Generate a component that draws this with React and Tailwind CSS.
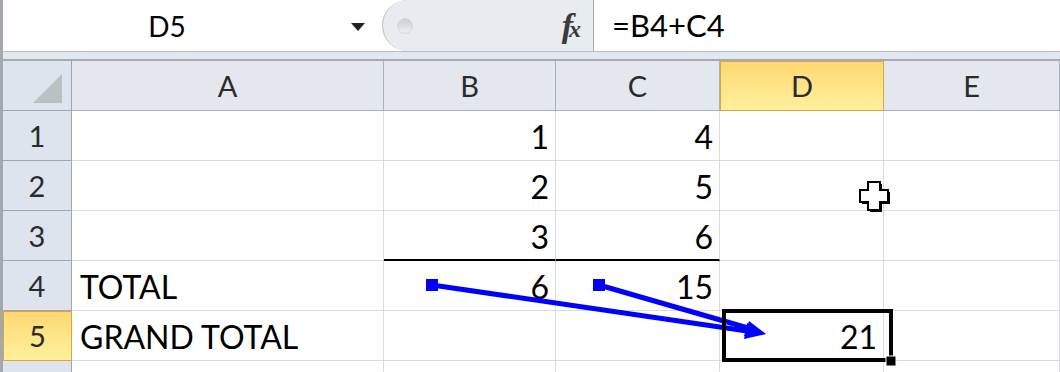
import React from 'react';

// Excel 2010 style sheet with trace precedents arrows

const cols = ['A', 'B', 'C', 'D', 'E'];

const rows = [
    { n: 1, cells: ['', '1', '4', '', ''] },
    { n: 2, cells: ['', '2', '5', '', ''] },
    { n: 3, cells: ['', '3', '6', '', ''], underline: [1, 2] },
    { n: 4, cells: ['TOTAL', '6', '15', '', ''] },
    { n: 5, cells: ['GRAND TOTAL', '', '', '21', ''], active: true },
];

const TopBar = () => (
    <div className="flex h-[52px] border-b border-[#b9bec4]">
        <div className="w-[379px] flex items-center">
            <div className="w-[328px] text-center text-[28px] text-black">D5</div>
            <svg width="14" height="8" viewBox="0 0 14 8" className="ml-[20px] mt-[2px]">
                <polygon points="0,0 14,0 7,8" fill="#222" />
            </svg>
        </div>
        <div className="w-[212px] h-[51px] flex items-center justify-between rounded-l-[26px] border-l border-[#b8bdc3] border-r border-r-[#a9aeb4] bg-[#e8ecf0] pl-[14px] pr-[12px]">
            <div className="w-[16px] h-[16px] rounded-full bg-gradient-to-b from-[#c9cdd1] to-[#eef0f2] border border-[#d4d7da]" />
            <div className="font-['Liberation_Serif'] italic font-bold text-[34px] leading-none text-[#3a3a3a] tracking-[-4px] pr-[4px]">
                f<span className="text-[24px]">x</span>
            </div>
        </div>
        <div className="flex-1 flex items-center pl-[18px] text-[31px] text-black">=B4+C4</div>
    </div>
);

const HeaderRow = () => (
    <>
        <div className="relative bg-[#dde4ed] border-r border-b border-[#9ea6b0]">
            <svg width="30" height="29" viewBox="0 0 30 29" className="absolute right-[8px] bottom-[7px]">
                <polygon points="29,0 29,29 0,29" fill="#b9c1c3" />
            </svg>
        </div>
        {cols.map((c) => (
            <div
                key={c}
                className={
                    c === 'D'
                        ? 'flex items-center justify-center bg-gradient-to-b from-[#fdd872] to-[#fff09c] border border-[#dba640] text-[29px] text-[#2b2b2b]'
                        : 'flex items-center justify-center bg-[#e4e8ee] border-r border-b border-[#a9b0b9] text-[29px] text-[#2b2b2b]'
                }
            >
                {c}
            </div>
        ))}
    </>
);

const Row = ({ row }) => (
    <>
        <div
            className={
                row.active
                    ? 'flex items-center justify-center bg-gradient-to-b from-[#fdd872] to-[#fff09c] border border-[#dba640] text-[29px] text-[#2b2b2b]'
                    : 'flex items-center justify-center bg-[#dde4ed] border-r border-b border-[#9ea6b0] text-[29px] text-[#2b2b2b]'
            }
        >
            {row.n}
        </div>
        {row.cells.map((v, i) => {
            const isText = i === 0;
            const under = row.underline && row.underline.includes(i);
            return (
                <div
                    key={i}
                    className={`flex items-center pt-[3px] text-[32px] text-black border-r border-[#dadcdd] ${
                        under ? 'border-b-2 border-b-black' : 'border-b'
                    } ${isText ? 'justify-start pl-[8px]' : 'justify-end pr-[6px]'}`}
                >
                    {v}
                </div>
            );
        })}
    </>
);

const Overlay = () => (
    <svg width="1060" height="372" className="absolute top-0 left-0 pointer-events-none">
        {/* trace precedents arrows */}
        <rect x="423" y="279" width="12" height="12" fill="#0000ff" />
        <rect x="590" y="279" width="12" height="12" fill="#0000ff" />
        <line x1="429" y1="285" x2="744" y2="331" stroke="#0000ff" strokeWidth="5" />
        <line x1="596" y1="285" x2="745" y2="328" stroke="#0000ff" strokeWidth="5" />
        <polygon points="763,334 741,339 744,323" fill="#0000ff" />
        <polygon points="763,334 741,336 746,321" fill="#0000ff" />

        {/* active cell */}
        <rect x="721" y="311" width="167" height="49" fill="none" stroke="#000" strokeWidth="4" />
        <rect x="883" y="356" width="10" height="10" fill="#000" stroke="#fff" strokeWidth="1" />

        {/* cursor */}
        <polygon
            points="867,184 879,184 879,192 887,192 887,204 879,204 879,212 867,212 867,204 859,204 859,192 867,192"
            fill="#000"
        />
        <polygon
            points="865,182 877,182 877,190 885,190 885,202 877,202 877,210 865,210 865,202 857,202 857,190 865,190"
            fill="#fff"
            stroke="#000"
            strokeWidth="2"
        />
    </svg>
);

const App = () => {
    return (
        <div className="relative w-[1060px] h-[372px] overflow-hidden bg-white border-l-[3px] border-[#a3a8ae] font-['Lato',sans-serif]">
            <TopBar />
            <div className="h-[7px] bg-[#e2e8f0]" />
            <div className="h-[2px] bg-[#a4aab1]" />
            <div className="grid grid-cols-[69px_312px_172px_164px_164px_1fr] auto-rows-[50px]">
                <HeaderRow />
                {rows.map((r) => (
                    <Row key={r.n} row={r} />
                ))}
                {/* row 6, cut off */}
                <div className="bg-[#dde4ed] border-r border-[#9ea6b0]" />
                {cols.map((c) => (
                    <div key={c} className="border-r border-[#dadcdd]" />
                ))}
            </div>
            <Overlay />
        </div>
    );
};

export default App;
